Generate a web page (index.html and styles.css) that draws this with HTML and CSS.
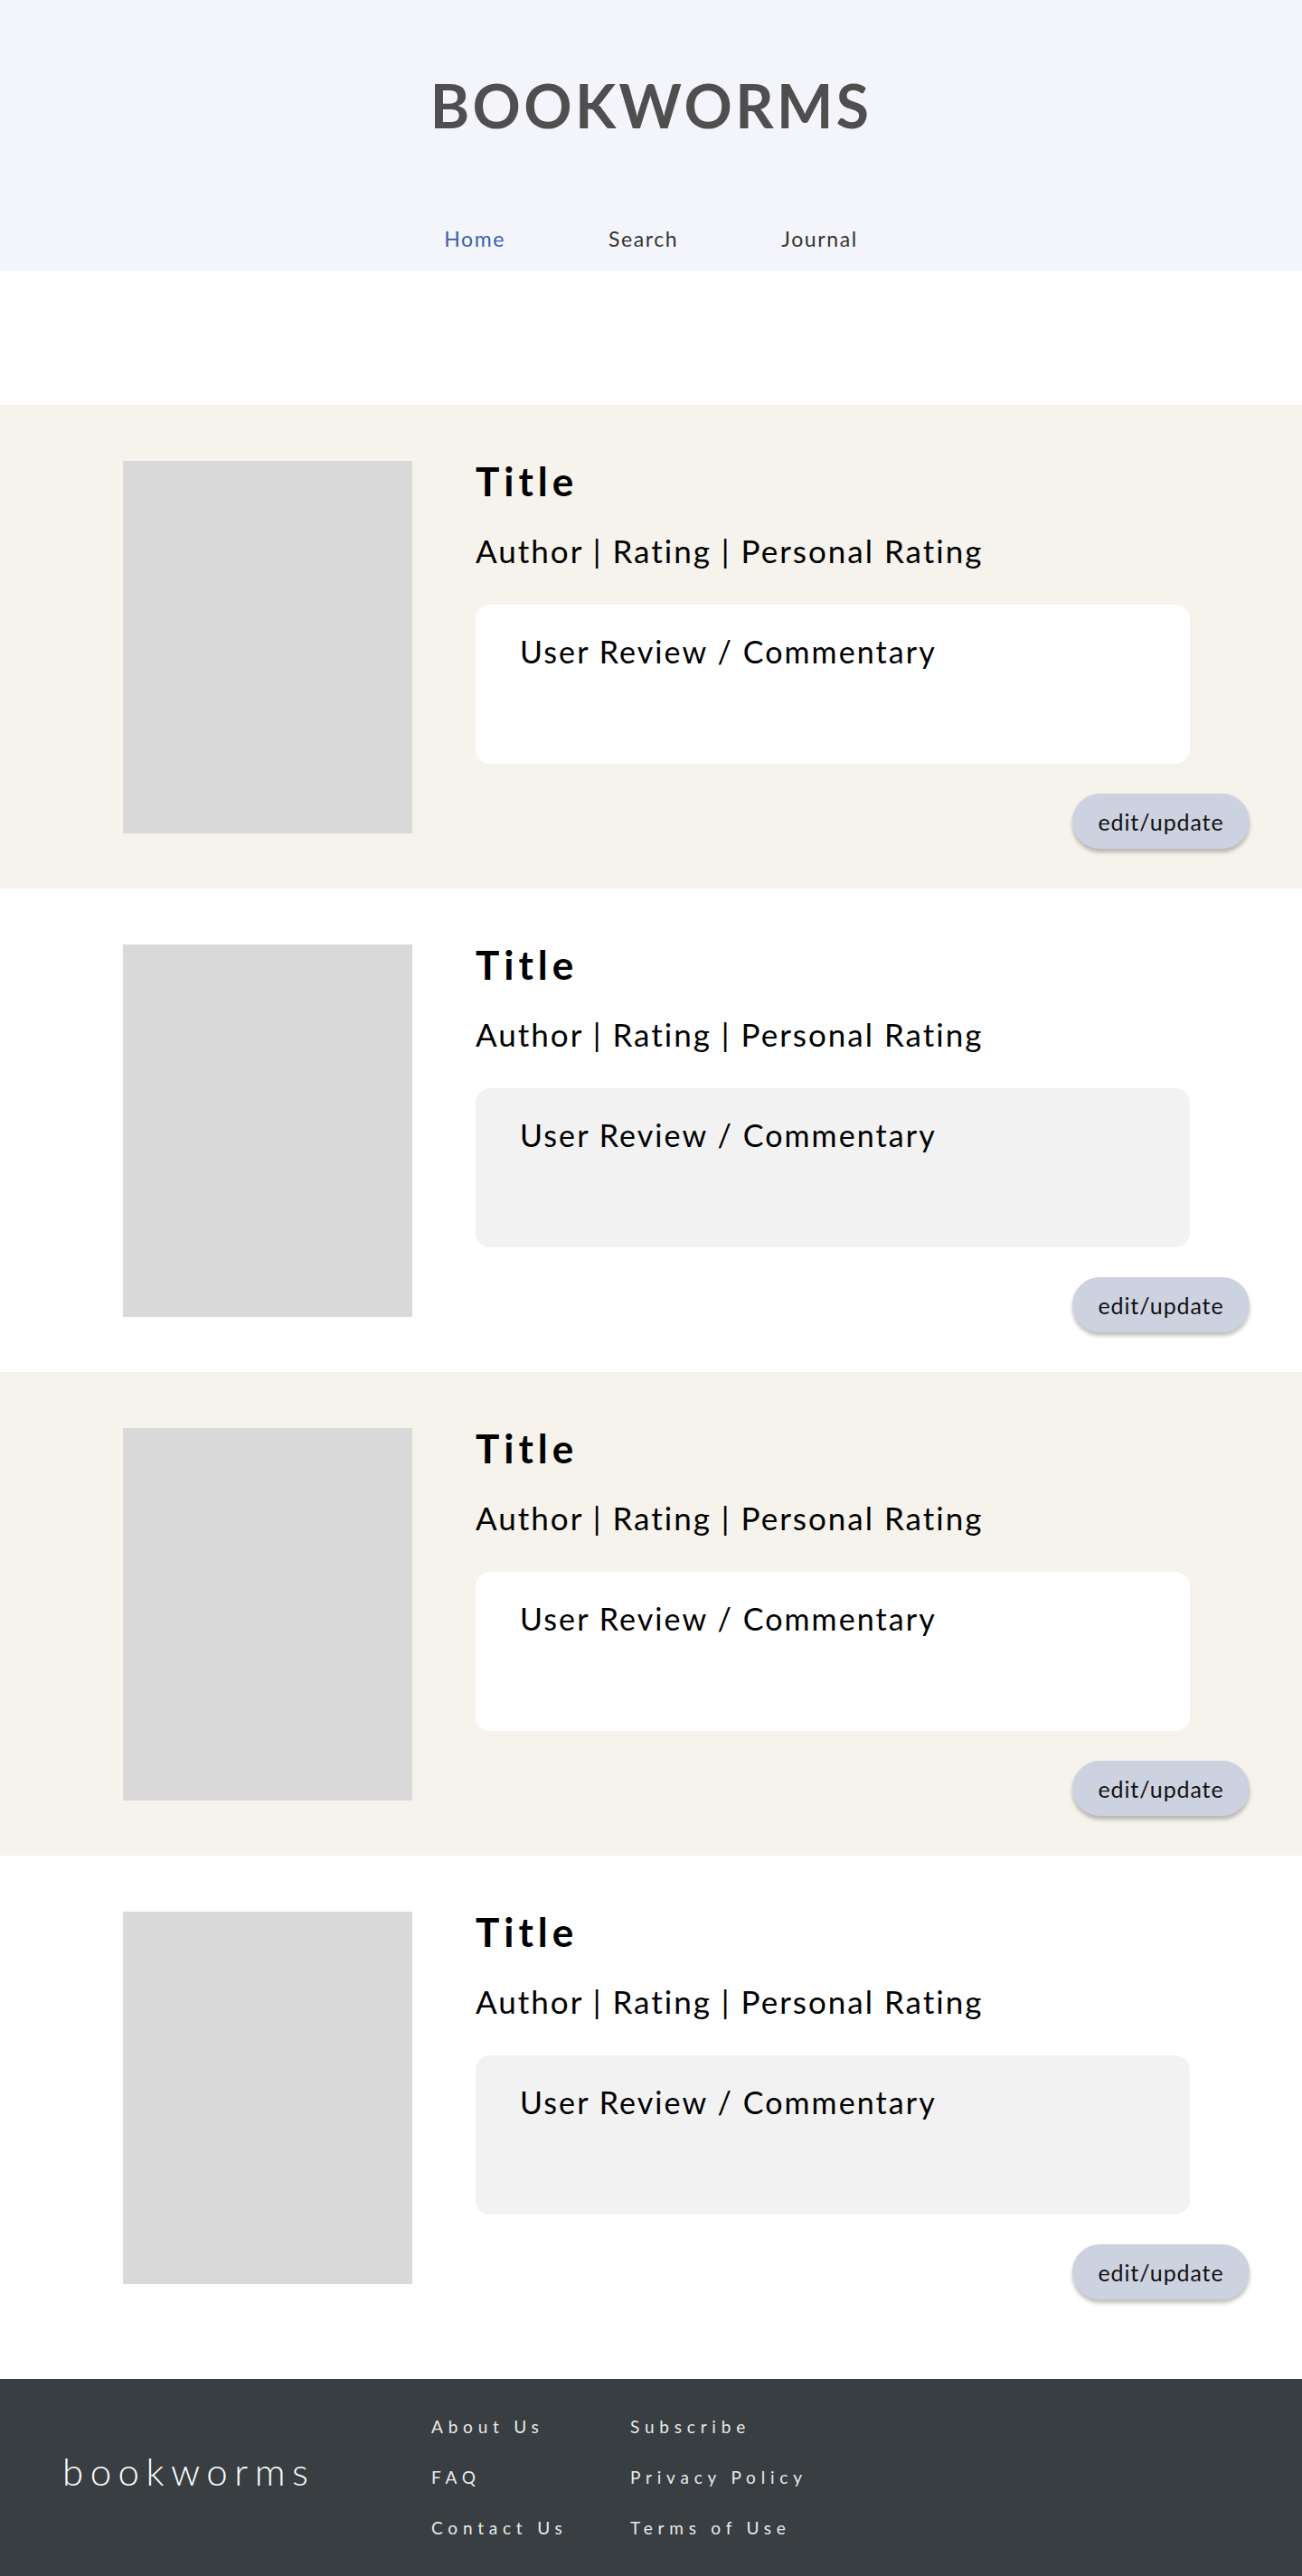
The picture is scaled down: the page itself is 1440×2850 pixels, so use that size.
FILE: index.html
```html
<!DOCTYPE html>
<html lang="en">
<head>
<meta charset="utf-8">
<title>Bookworms</title>
<link rel="stylesheet" href="styles.css">
</head>
<body>
<header class="site-header">
  <h1 class="brand">BOOKWORMS</h1>
  <nav class="nav">
    <a class="nav-link active" href="#">Home</a>
    <a class="nav-link" href="#">Search</a>
    <a class="nav-link" href="#">Journal</a>
  </nav>
</header>

<main class="entries">
  <section class="entry tinted">
    <div class="cover"></div>
    <div class="entry-body">
      <h2 class="entry-title">Title</h2>
      <p class="entry-meta">Author | Rating | Personal Rating</p>
      <div class="review"><p>User Review / Commentary</p></div>
      <button class="edit-btn">edit/update</button>
    </div>
  </section>

  <section class="entry plain">
    <div class="cover"></div>
    <div class="entry-body">
      <h2 class="entry-title">Title</h2>
      <p class="entry-meta">Author | Rating | Personal Rating</p>
      <div class="review"><p>User Review / Commentary</p></div>
      <button class="edit-btn">edit/update</button>
    </div>
  </section>

  <section class="entry tinted">
    <div class="cover"></div>
    <div class="entry-body">
      <h2 class="entry-title">Title</h2>
      <p class="entry-meta">Author | Rating | Personal Rating</p>
      <div class="review"><p>User Review / Commentary</p></div>
      <button class="edit-btn">edit/update</button>
    </div>
  </section>

  <section class="entry plain last">
    <div class="cover"></div>
    <div class="entry-body">
      <h2 class="entry-title">Title</h2>
      <p class="entry-meta">Author | Rating | Personal Rating</p>
      <div class="review"><p>User Review / Commentary</p></div>
      <button class="edit-btn">edit/update</button>
    </div>
  </section>
</main>

<footer class="site-footer">
  <div class="footer-logo">bookworms</div>
  <ul class="footer-links">
    <li><a href="#">About Us</a></li>
    <li><a href="#">Subscribe</a></li>
    <li><a href="#">FAQ</a></li>
    <li><a href="#">Privacy Policy</a></li>
    <li><a href="#">Contact Us</a></li>
    <li><a href="#">Terms of Use</a></li>
  </ul>
</footer>
</body>
</html>
```

FILE: styles.css
```css
* { box-sizing: border-box; }

body {
  margin: 0;
  font-family: Lato, "Noto Sans", "Liberation Sans", sans-serif;
  color: #000;
  background: #fff;
}

.site-header {
  height: 300px;
  background: #f4f5fa;
  display: flex;
  flex-direction: column;
  align-items: center;
  padding-top: 77px;
}

.brand {
  margin: 0;
  font-size: 66px;
  line-height: 79px;
  font-weight: 700;
  letter-spacing: 3.4px;
  color: #4f4f4f;
}

.nav {
  margin-top: 95px;
  display: flex;
  gap: 114px;
}

.nav-link {
  font-size: 23px;
  line-height: 27px;
  letter-spacing: 1.6px;
  color: #333;
  text-decoration: none;
}

.nav-link.active { color: #3b5fae; }

.entries { margin-top: 148px; }

.entry {
  display: flex;
  align-items: flex-start;
  gap: 70px;
  padding: 62px 58px 44px 136px;
}

.entry.tinted { background: #f6f3ec; }
.entry.plain { background: #fff; }
.entry.last { padding-bottom: 88px; }

.cover {
  flex: 0 0 320px;
  height: 412px;
  background: #d9d9d9;
}

.entry-body {
  flex: 1;
  display: flex;
  flex-direction: column;
}

.entry-title {
  margin: 0;
  font-size: 44px;
  line-height: 45px;
  font-weight: 700;
  letter-spacing: 5px;
}

.entry-meta {
  margin: 33px 0 0;
  font-size: 35px;
  line-height: 42px;
  font-weight: 400;
  letter-spacing: 2px;
}

.review {
  margin-top: 39px;
  width: 790px;
  height: 176px;
  border-radius: 16px;
  padding: 31px 49px;
  background: #f2f2f2;
}

.tinted .review { background: #fff; }

.review p {
  margin: 0;
  font-size: 34px;
  line-height: 41px;
  letter-spacing: 2.1px;
}

.edit-btn {
  align-self: flex-end;
  margin-top: 33px;
  width: 196px;
  height: 61px;
  border: none;
  border-radius: 31px;
  background: #cdd2e0;
  box-shadow: 0 4px 4px rgba(0, 0, 0, 0.25);
  font-family: inherit;
  font-size: 25px;
  letter-spacing: 0.9px;
  color: #111;
  cursor: pointer;
}

.site-footer {
  height: 218px;
  background: #383e41;
  display: flex;
  align-items: center;
  padding-left: 69px;
}

.footer-logo {
  width: 408px;
  padding-bottom: 14px;
  font-size: 42px;
  font-weight: 300;
  letter-spacing: 7.5px;
  color: #fff;
}

.footer-links {
  list-style: none;
  margin: 0;
  padding: 0;
  display: grid;
  grid-template-columns: 220px auto;
}

.footer-links a {
  display: block;
  font-size: 19px;
  line-height: 56px;
  letter-spacing: 5.8px;
  color: #eaeaea;
  text-decoration: none;
  font-weight: 400;
}
```
